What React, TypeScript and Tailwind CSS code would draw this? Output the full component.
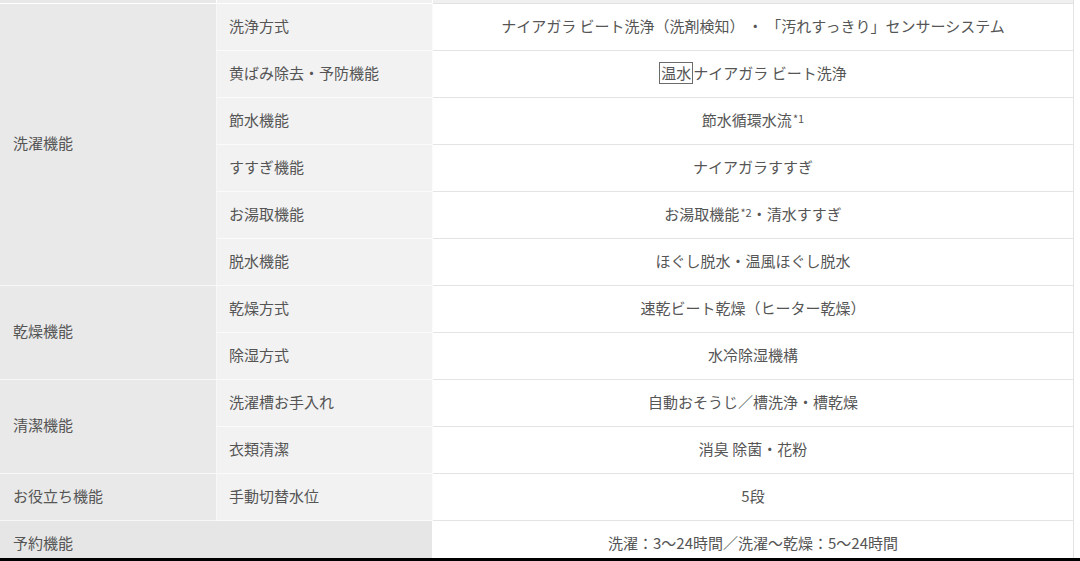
const font = { fontFamily: '"Noto Sans CJK JP", "Noto Sans", sans-serif' };

type Row = { head?: string; span?: number; sub: string; value: React.ReactNode };

const rows: Row[] = [
  { head: "洗濯機能", span: 6, sub: "洗浄方式", value: "ナイアガラ ビート洗浄（洗剤検知） ・ 「汚れすっきり」センサーシステム" },
  {
    sub: "黄ばみ除去・予防機能",
    value: (
      <>
        <span className="border border-[#6b6b6b] px-px leading-[20px]">温水</span>ナイアガラ ビート洗浄
      </>
    ),
  },
  {
    sub: "節水機能",
    value: (
      <>
        節水循環水流<sup className="text-[11px] relative -top-[2px] ml-px">*1</sup>
      </>
    ),
  },
  { sub: "すすぎ機能", value: "ナイアガラすすぎ" },
  {
    sub: "お湯取機能",
    value: (
      <>
        お湯取機能<sup className="text-[11px] relative -top-[2px] ml-px">*2</sup>・清水すすぎ
      </>
    ),
  },
  { sub: "脱水機能", value: "ほぐし脱水・温風ほぐし脱水" },
  { head: "乾燥機能", span: 2, sub: "乾燥方式", value: "速乾ビート乾燥（ヒーター乾燥）" },
  { sub: "除湿方式", value: "水冷除湿機構" },
  { head: "清潔機能", span: 2, sub: "洗濯槽お手入れ", value: "自動おそうじ／槽洗浄・槽乾燥" },
  { sub: "衣類清潔", value: "消臭 除菌・花粉" },
  { head: "お役立ち機能", span: 1, sub: "手動切替水位", value: "5段" },
];

const spanClass: Record<number, string> = {
  1: "row-span-1",
  2: "row-span-2",
  6: "row-span-6",
};

export default function App() {
  return (
    <div className="w-[1080px] h-[561px] overflow-hidden bg-white text-[15px] text-[#555]" style={font}>
      <div className="h-[558px] overflow-hidden">
        <div className="grid grid-cols-[217px_216px_641px] grid-rows-[4px_repeat(12,47px)]">
          <div className="bg-[#e8e8e8] border-b border-r border-white" />
          <div className="bg-[#f1f1f1] border-b border-r border-white" />
          <div className="bg-[#f0f0f0] border-b border-r border-[#e2e2e2]" />

          {rows.map((r, i) => (
            <Cells key={i} r={r} />
          ))}

          <div className="col-span-2 bg-[#e6e6e6] border-r border-white flex items-center pl-[13px] pb-[2px]">予約機能</div>
          <div className="bg-white border-r border-[#e2e2e2] flex items-center justify-center pb-[2px]">
            洗濯：3〜24時間／洗濯〜乾燥：5〜24時間
          </div>
        </div>
      </div>
      <div className="h-[3px] bg-black" />
    </div>
  );
}

function Cells({ r }: { r: Row }) {
  return (
    <>
      {r.head && (
        <div
          className={`${spanClass[r.span ?? 1]} bg-[#e9e9e9] border-b border-r border-[#f7f7f7] flex items-center pl-[13px] pb-[2px]`}
        >
          {r.head}
        </div>
      )}
      <div className="bg-[#f2f2f2] border-b border-r border-[#fbfbfb] flex items-center pl-[12px] pb-[2px]">{r.sub}</div>
      <div className="bg-white border-b border-r border-[#e4e4e4] flex items-center justify-center pb-[2px]">{r.value}</div>
    </>
  );
}
